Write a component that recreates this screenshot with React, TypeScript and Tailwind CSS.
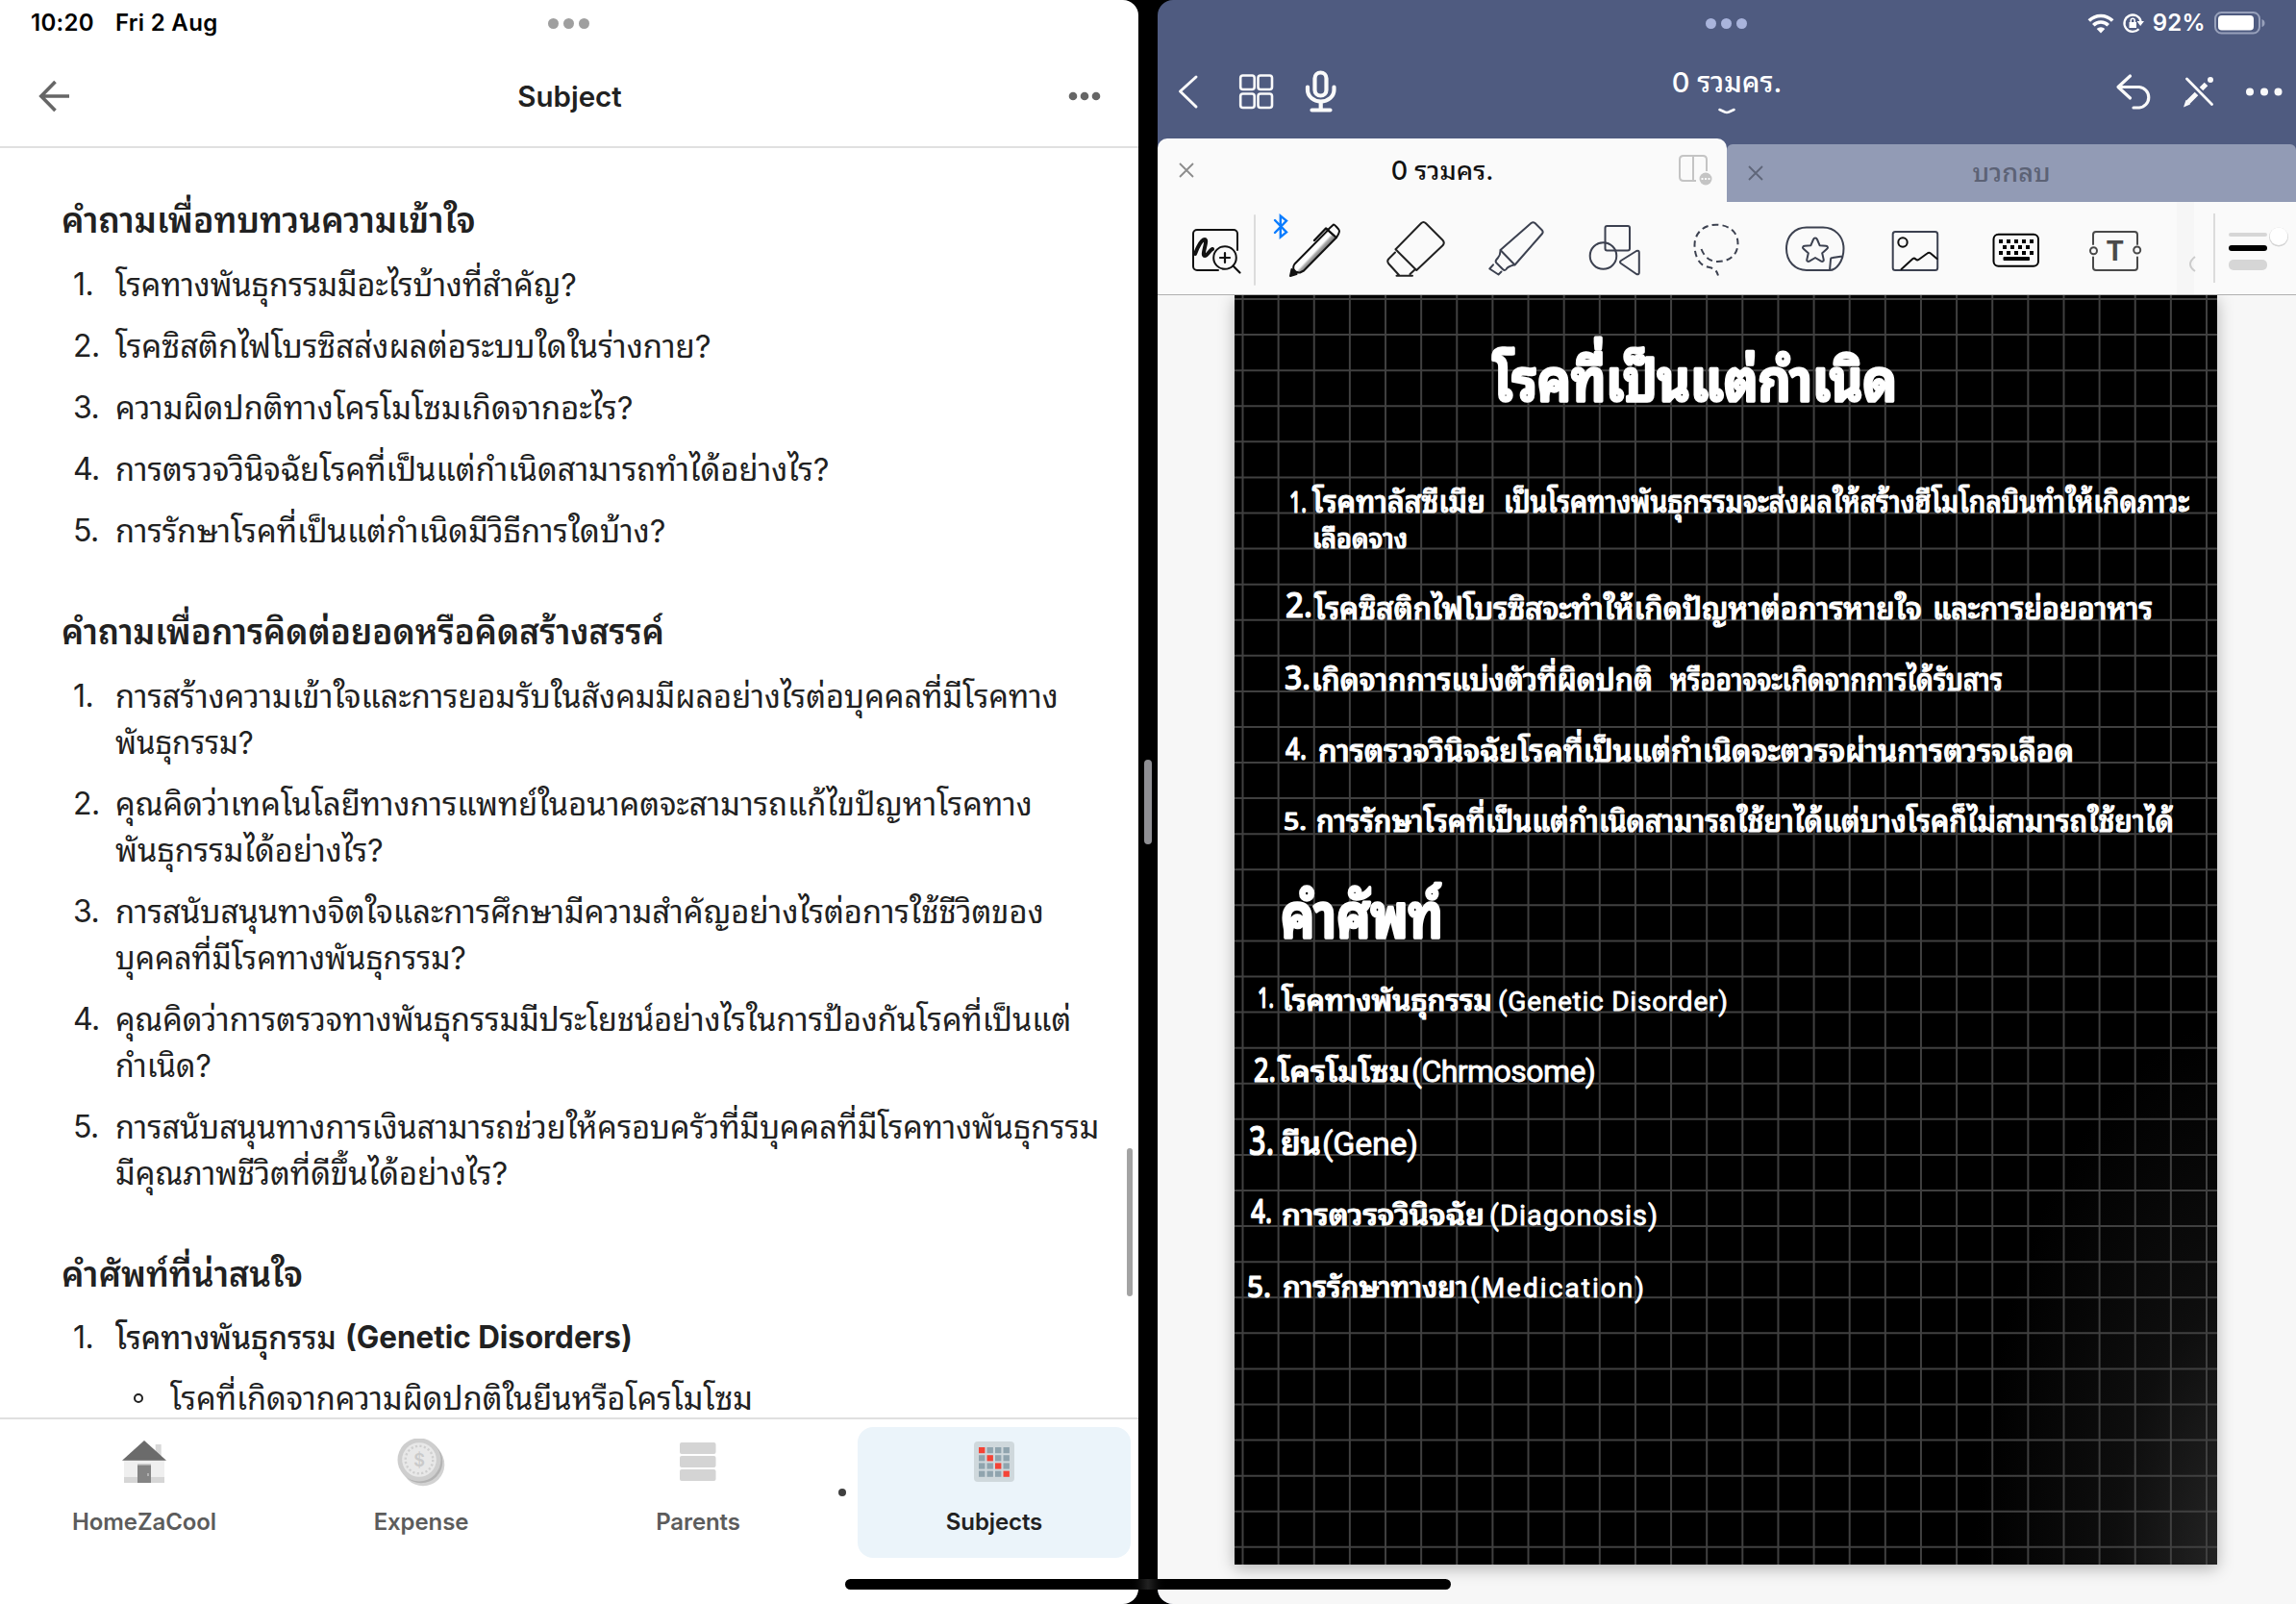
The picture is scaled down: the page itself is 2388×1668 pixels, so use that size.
import { useLayoutEffect, useRef, useState } from 'react'
import type { ReactNode } from 'react'

const THAI = "font-['Inter','Noto_Sans_Thai_Looped',sans-serif]"

// every question is a list of [line, width]
const reviewQuestions: [string, number][][] = [
  [['โรคทางพันธุกรรมมีอะไรบ้างที่สำคัญ?', 480]],
  [['โรคซิสติกไฟโบรซิสส่งผลต่อระบบใดในร่างกาย?', 620]],
  [['ความผิดปกติทางโครโมโซมเกิดจากอะไร?', 539]],
  [['การตรวจวินิจฉัยโรคที่เป็นแต่กำเนิดสามารถทำได้อย่างไร?', 743]],
  [['การรักษาโรคที่เป็นแต่กำเนิดมีวิธีการใดบ้าง?', 572]],
]

const creativeQuestions: [string, number][][] = [
  [['การสร้างความเข้าใจและการยอมรับในสังคมมีผลอย่างไรต่อบุคคลที่มีโรคทาง', 981], ['พันธุกรรม?', 144]],
  [['คุณคิดว่าเทคโนโลยีทางการแพทย์ในอนาคตจะสามารถแก้ไขปัญหาโรคทาง', 954], ['พันธุกรรมได้อย่างไร?', 279]],
  [['การสนับสนุนทางจิตใจและการศึกษามีความสำคัญอย่างไรต่อการใช้ชีวิตของ', 966], ['บุคคลที่มีโรคทางพันธุกรรม?', 365]],
  [['คุณคิดว่าการตรวจทางพันธุกรรมมีประโยชน์อย่างไรในการป้องกันโรคที่เป็นแต่', 994], ['กำเนิด?', 100]],
  [['การสนับสนุนทางการเงินสามารถช่วยให้ครอบครัวที่มีบุคคลที่มีโรคทางพันธุกรรม', 1023], ['มีคุณภาพชีวิตที่ดีขึ้นได้อย่างไร?', 408]],
]

// ink on the page: x, baseline, width, size, text
const ink: [number, number, number, number, string][] = [
  [57, 226, 18, 30, '1.'],
  [81, 226, 180, 31, 'โรคทาลัสซีเมีย'],
  [280, 226, 713, 31, 'เป็นโรคทางพันธุกรรมจะส่งผลให้สร้างฮีโมโกลบินทำให้เกิดภาวะ'],
  [81, 263, 99, 28, 'เลือดจาง'],
  [53, 335, 28, 36, '2.'],
  [83, 337, 632, 31, 'โรคซิสติกไฟโบรซิสจะทำให้เกิดปัญหาต่อการหายใจ'],
  [726, 337, 229, 31, 'และการย่อยอาหาร'],
  [52, 410, 27, 34, '3.'],
  [80, 411, 355, 31, 'เกิดจากการแบ่งตัวที่ผิดปกติ'],
  [453, 411, 346, 31, 'หรืออาจจะเกิดจากการได้รับสาร'],
  [53, 483, 22, 33, '4.'],
  [87, 485, 786, 31, 'การตรวจวินิจฉัยโรคที่เป็นแต่กำเนิดจะตวรจผ่านการตวรจเลือด'],
  [51, 556, 24, 25, '5.'],
  [85, 558, 892, 31, 'การรักษาโรคที่เป็นแต่กำเนิดสามารถใช้ยาได้แต่บางโรคก็ไม่สามารถใช้ยาได้'],
  [24, 741, 17, 28, '1.'],
  [49, 744, 219, 30, 'โรคทางพันธุกรรม'],
  [20, 818, 23, 34, '2.'],
  [45, 818, 137, 30, 'โครโมโซม'],
  [15, 894, 26, 42, '3.'],
  [48, 894, 42, 33, 'ยีน'],
  [17, 965, 22, 35, '4.'],
  [49, 967, 211, 30, 'การตวรจวินิจฉัย'],
  [13, 1042, 25, 30, '5.'],
  [50, 1042, 193, 30, 'การรักษาทางยา'],
]

const latinInk: [number, number, number, number, string][] = [
  [274, 744, 239, 28, '(Genetic Disorder)'],
  [184, 818, 192, 32, '(Chrmosome)'],
  [91, 894, 100, 34, '(Gene)'],
  [265, 967, 175, 29, '(Diagonosis)'],
  [245, 1042, 181, 28, '(Medication)'],
]

// squeezes or stretches one line of text to the given width
function Fit({ width, children }: { width: number; children: ReactNode }) {
  const ref = useRef<HTMLSpanElement>(null)
  const [scale, setScale] = useState(1)
  useLayoutEffect(() => {
    if (ref.current) setScale(width / ref.current.offsetWidth)
  }, [width])
  return (
    <span ref={ref} className="inline-block origin-left whitespace-nowrap" style={{ transform: `scaleX(${scale})` }}>
      {children}
    </span>
  )
}

function Dots({ color, className = '' }: { color: string; className?: string }) {
  return (
    <div className={`flex gap-[5px] ${className}`}>
      <i className={`size-[11px] rounded-full ${color}`} />
      <i className={`size-[11px] rounded-full ${color}`} />
      <i className={`size-[11px] rounded-full ${color}`} />
    </div>
  )
}

function Questions({ items }: { items: [string, number][][] }) {
  return (
    <ol className="mt-[19px] flex flex-col gap-4 text-[33px] leading-[48px]">
      {items.map((lines, i) => (
        <li key={i} className="flex whitespace-nowrap">
          <span className="w-[55px] shrink-0 pl-[11px] text-[32px] tracking-[-0.5px]">{i + 1}.</span>
          <div>
            {lines.map(([text, width]) => (
              <div key={text} className="h-12">
                <Fit width={width}>{text}</Fit>
              </div>
            ))}
          </div>
        </li>
      ))}
    </ol>
  )
}

function Heading({ children, width, className = '' }: { children: ReactNode; width: number; className?: string }) {
  return (
    <h2 className={`-ml-px h-12 text-[36px] leading-[48px] font-semibold ${className}`}>
      <Fit width={width}>{children}</Fit>
    </h2>
  )
}

function NavItem({ label, children, active }: { label: string; children: ReactNode; active?: boolean }) {
  return (
    <div
      className={
        active
          ? 'flex h-[136px] w-[284px] flex-col items-center rounded-2xl bg-[#ebf4fa] pt-3 text-[#212121]'
          : 'flex h-[136px] w-[288px] flex-col items-center pt-3 text-[#5c5c5c]'
      }
    >
      {children}
      <span className="mt-[23px] text-[24px] leading-8 font-semibold tracking-[-0.1px]">{label}</span>
    </div>
  )
}

function SubjectPane() {
  return (
    <section className="flex h-full w-[1184px] flex-col overflow-hidden rounded-r-[16px] bg-white text-[#212121]">
      <div className="grid h-12 shrink-0 grid-cols-3 items-center px-8 text-[24px] font-semibold tracking-[0.3px] text-black">
        <div className="flex gap-[22px] whitespace-nowrap">
          <span>10:20</span>
          <span>Fri 2 Aug</span>
        </div>
        <Dots color="bg-[#9f9f9f]" className="justify-self-center" />
      </div>
      <header className="flex h-[106px] shrink-0 items-center justify-between border-b-2 border-[#e0e0e0] pr-[39px] pl-10">
        <svg width="34" height="34" viewBox="0 0 34 34" fill="none" stroke="#666" strokeWidth="3.6">
          <path d="M32 17H3M17.5 2 2.8 17l14.7 15" />
        </svg>
        <h1 className="text-[29.5px] font-semibold">Subject</h1>
        <svg width="34" height="10" viewBox="0 0 34 10" fill="#666">
          <circle cx="5" cy="5" r="4.3" />
          <circle cx="17" cy="5" r="4.3" />
          <circle cx="29" cy="5" r="4.3" />
        </svg>
      </header>

      <div className="relative min-h-0 flex-1 overflow-hidden pt-[51px] pl-[65px]">
        <Heading width={431}>คำถามเพื่อทบทวนความเข้าใจ</Heading>
        <Questions items={reviewQuestions} />
        <Heading width={627} className="mt-[57px]">คำถามเพื่อการคิดต่อยอดหรือคิดสร้างสรรค์</Heading>
        <Questions items={creativeQuestions} />
        <Heading width={251} className="mt-[57px]">คำศัพท์ที่น่าสนใจ</Heading>
        <div className="mt-[18px] flex h-12 text-[33px] leading-[48px] whitespace-nowrap">
          <span className="w-[55px] shrink-0 pl-[11px] text-[32px] tracking-[-0.5px]">1.</span>
          <div className="w-[239px] font-medium">
            <Fit width={230}>โรคทางพันธุกรรม</Fit>
          </div>
          <b className="text-[32px]">
            <Fit width={299}>(Genetic Disorders)</Fit>
          </b>
        </div>
        <div className="mt-[15px] flex h-12 items-center text-[33px] leading-[48px]">
          <i className="mr-[28px] ml-[74px] size-[10px] rounded-full border-2 border-[#212121]" />
          <Fit width={606}>โรคที่เกิดจากความผิดปกติในยีนหรือโครโมโซม</Fit>
        </div>
        <i className="absolute top-[1040px] right-1.5 h-[154px] w-1.5 rounded-full bg-[#a3a3a3]" />
      </div>

      <nav className="flex h-[194px] shrink-0 border-t-2 border-[#e0e0e0] pt-2 pl-1.5">
        <NavItem label="HomeZaCool">
          <svg width="48" height="48" viewBox="0 0 48 48">
            <path fill="#d8d8d8" d="M35.7 6h6v16h-6z" />
            <path fill="#efefef" d="M3 22h42v24H3z" />
            <path fill="#d6d6d6" d="M3 40h42v6H3z" />
            <path fill="#848484" d="M17 27h14v19H17z" />
            <path fill="#b0b0b0" d="M17 26.5h14v1.5H17zM27 36h2v3h-2z" />
            <path fill="#6b6b6b" d="M24 2 47 22.7H1z" />
          </svg>
        </NavItem>
        <NavItem label="Expense">
          <svg width="50" height="50" viewBox="0 0 50 50" className="-mb-0.5">
            <circle cx="27" cy="27" r="22.3" fill="#d2d2d2" />
            <circle cx="25" cy="24" r="22.3" fill="#b3b3b3" />
            <circle cx="23" cy="22" r="22.5" fill="#cecece" />
            <circle cx="23" cy="22" r="17.8" fill="#e8e8e8" />
            <circle cx="23" cy="22" r="14.3" fill="none" stroke="#cfcfcf" strokeWidth="2.4" strokeDasharray="2.2 2.29" />
            <text x="23" y="28.5" textAnchor="middle" fontSize="18" fontWeight="600" fill="#cacaca">$</text>
          </svg>
        </NavItem>
        <NavItem label="Parents">
          <svg width="48" height="48" viewBox="0 0 48 48" fill="#d4d4d4">
            <rect x="5" y="4" width="37.5" height="12" rx="2" />
            <rect x="5" y="18" width="37.5" height="12" rx="2" />
            <rect x="5" y="32" width="37.5" height="12" rx="2" />
          </svg>
        </NavItem>
        <i className="mt-[64px] mr-[12px] ml-[2px] size-2 rounded-full bg-[#3f3f3f]" />
        <NavItem label="Subjects" active>
          <svg width="48" height="48" viewBox="0 0 48 48">
            <rect x="3" y="3" width="42" height="42" rx="4" fill="#cfd8dc" />
            {[0, 1, 2, 3].map((r) =>
              [0, 1, 2, 3].map((c) => (
                <rect key={r * 4 + c} x={8 + c * 8.5} y={9 + r * 8.2} width="6.4" height="6.2" fill={r === c ? '#f44336' : '#90a4ae'} />
              ))
            )}
          </svg>
        </NavItem>
      </nav>
    </section>
  )
}

function Close({ color }: { color: string }) {
  return (
    <svg width="16" height="16" viewBox="0 0 16 16" stroke={color} strokeWidth="1.8">
      <path d="m1 1 14 14M15 1 1 15" />
    </svg>
  )
}

function Tool({ children, color = '#3c4150' }: { children: ReactNode; color?: string }) {
  return (
    <svg className="shrink-0" width="104" height="96" viewBox="0 0 104 96" fill="none" stroke={color} strokeWidth="2" strokeLinejoin="round" strokeLinecap="round">
      {children}
    </svg>
  )
}

function Toolbar() {
  return (
    <div className="relative flex h-[97px] shrink-0 border-b border-[#b0b0b0] bg-[#fafafa] pl-2">
      <Tool color="#111">
        <path d="M75 50V33a4 4 0 0 0-4-4H33a4 4 0 0 0-4 4v34a4 4 0 0 0 4 4h22" />
        <path strokeWidth="4" d="M31 54c3-8 7-15 10-15 4 0-4 17 0 17 3 0 5-6 8-7" />
        <circle cx="62" cy="58" r="11.8" fill="#fafafa" />
        <path strokeWidth="2.2" d="M62 53v10M57 58h10M70.5 66.5l7 7" />
        <path stroke="#dcdcdc" strokeWidth="2" d="M93 14v72" />
      </Tool>
      <Tool color="#111">
        <path stroke="#0a7cff" strokeWidth="2.4" strokeLinejoin="miter" d="m10 19 12 12.5-6.2 5V14.5l6.200 5L10 32" />
        <defs>
          <linearGradient id="barrel" x1="47" y1="47.5" x2="55.5" y2="55.5" gradientUnits="userSpaceOnUse">
            <stop offset=".5" stopColor="#fff" />
            <stop offset=".7" stopColor="#aaa" />
            <stop offset="1" stopColor="#777" />
          </linearGradient>
        </defs>
        <path fill="url(#barrel)" d="M65 29.5 30.5 64.500C28 68 29 74 36 73.500L40 71.500 74 37z" />
        <path fill="#fafafa" d="m65 29 6-5.500c1 0 6 5 6 6.500s-1 4-3 7z" />
        <path strokeWidth="2.4" d="m51 40 12-12.500 2.500 2" />
        <path fill="#111" d="m26 77 1.500-7 5 5z" />
      </Tool>
      <Tool color="#222">
        <path d="m31.500 49.300 26.500-27q2.500-2.500 5 0l17.500 17.500q2.500 2.700 0 5.500L53.300 71z" />
        <path d="m31 52.500-6.500 6.500q-2.500 2.500 0 5.500L35 76M32.500 76.700H49M46.500 75l5.500-5" />
      </Tool>
      <Tool>
        <path d="m36.500 50 32-28q2-1.500 4 0l7 7q2 2 .5 4L51.500 65.500z" />
        <path d="M36.500 51c0 6-2 6-4.500 9.500q-1 2 1 3.500l6 6q2 2 3.500 0c2-3 4-3.500 8-4.500M29 65.300l-3.700 4.200 9.200 6 3-3" />
      </Tool>
      <Tool>
        <circle cx="39.500" cy="56" r="13.800" />
        <rect x="41.500" y="25" width="25.500" height="25.500" rx="2" />
        <path d="M58 61q-2 1.500 0 3l16 11q2.800 1 2.800-1.500v-21q0-2.500-2.800-1.500z" />
      </Tool>
      <Tool>
        <path strokeDasharray="6.500 4.200" strokeLinecap="butt" d="M37.500 49C41 58 47 62 54.500 62 67 62 75.500 55 75.500 43S66 23.700 53 23.700 30.500 32 30.500 45c0 9 3 17 9 21 6 3 13 1 15.500 10.500" />
      </Tool>
      <Tool>
        <path d="M67 71H43c-12 0-21-9-21-22.500S31 26.500 43 26.500h17c12 0 21.500 9 21.500 22S74 71 67 71l1-11q0-2 2-2l10-1.500" />
        <path d="M52 37.500c1 0 1.700.7 2 1.500l2.600 6.200 6.600.6c1.800.3 2.400 1.800 1 3l-5 4.500 1.500 6.600c.3 1.600-1.200 2.500-2.600 1.700L52 58l-6.100 3.600c-1.400.8-2.900-.1-2.600-1.700l1.500-6.600-5-4.500c-1.400-1.200-.8-2.700 1-3l6.600-.6L50 39c.3-.8 1-1.500 2-1.500z" />
      </Tool>
      <Tool>
        <rect x="28.700" y="31" width="46.500" height="40" rx="2.500" />
        <g stroke="#111">
          <circle cx="39" cy="42" r="4.700" />
          <path d="m37.500 70 12-11q1.500-1 3 .5t3 .5l9-6.500q1.800-1.500 3.500 0l6.500 5.500" />
        </g>
      </Tool>
      <Tool color="#000">
        <rect x="29.500" y="33.700" width="46.500" height="33" rx="5" />
        <g fill="#000" stroke="none">
          {[35, 43, 51, 59, 67].map((x) => (
            <path key={x} d={`M${x} 39h4v4h-4zM${x} 51h4v4h-4z`} />
          ))}
          {[39, 47, 55, 63].map((x) => (
            <path key={x} d={`M${x} 45h4v4h-4z`} />
          ))}
          <rect x="39.500" y="57" width="27.500" height="4" rx="1" />
        </g>
      </Tool>
      <Tool color="#4a4a4a">
        <path d="M29 44V34q0-3 3-3h40q3 0 3 3v10M29 57.500V68q0 3 3 3h40q3 0 3-3V57.500" />
        <circle cx="29.500" cy="50.700" r="3.500" />
        <circle cx="74.700" cy="50" r="3.500" />
        <text x="51.800" y="61.300" textAnchor="middle" fontSize="28.500" fontWeight="700" fill="#4a4a4a" stroke="none">T</text>
      </Tool>
      <svg width="136" height="96" viewBox="0 0 136 96" fill="none" className="shrink-0">
        <path fill="#f6f6f6" d="M12 0h18v96H12z" />
        <path stroke="#ccc" strokeWidth="2" d="M31 57q-10 8 0 15" />
        <path stroke="#dcdcdc" strokeWidth="2" d="M51 12v72" />
        <rect x="66" y="32" width="40" height="4" rx="2" fill="#d6d6d6" />
        <rect x="66" y="45" width="40" height="6" rx="3" fill="#000" />
        <rect x="66" y="60" width="40" height="11" rx="5" fill="#d6d6d6" />
        <circle cx="118" cy="36.500" r="10" fill="#d4d4d4" />
        <circle cx="118" cy="35.700" r="9.300" fill="#fff" />
      </svg>
    </div>
  )
}

function NotesHeader() {
  return (
    <header className="flex h-[144px] shrink-0 flex-col text-white">
      <div className="grid h-12 grid-cols-3 items-center">
        <Dots color="bg-[#a9b4dc]" className="col-start-2 justify-self-center" />
        <div className="mr-[31px] flex items-center justify-self-end text-[24px] font-semibold">
          <svg width="28" height="22" viewBox="0 0 28 22" fill="none" stroke="#fff" strokeWidth="3.600">
            <path d="M1.800 8.500a17.300 17.300 0 0 1 24.400 0M6.300 13.200a10.900 10.900 0 0 1 15.400 0" />
            <path fill="#fff" stroke="none" d="M14 21.500 9.700 17a6.200 6.200 0 0 1 8.600 0z" />
          </svg>
          <svg width="24" height="22" viewBox="0 0 24 22" fill="none" stroke="#fff" strokeWidth="2.300" className="ml-2">
            <path d="M17.500 17.200A8.700 8.700 0 1 1 19.600 9" />
            <path fill="#fff" stroke="none" d="M15.500 9h7.500l-3.800 5zM7.500 10h7.500v6H7.500z" />
            <path strokeWidth="1.500" d="M9.200 10V8.200a2 2 0 0 1 4 0V10" />
          </svg>
          <span className="ml-2 tracking-[0.3px]">92%</span>
          <svg width="54" height="24" viewBox="0 0 54 24" fill="none" className="ml-[9px]">
            <rect x="1" y="1" width="46" height="21.500" rx="6.500" stroke="#98a1bb" strokeWidth="2" />
            <rect x="4" y="4" width="37" height="15.500" rx="3.800" fill="#fff" />
            <path fill="#98a1bb" d="M49.500 8q3 1 3 4t-3 4z" />
          </svg>
        </div>
      </div>
      <div className="grid h-24 grid-cols-3 items-start">
        <svg width="190" height="80" viewBox="0 0 190 80" fill="none" stroke="#fafafa" strokeWidth="3" strokeLinecap="round" strokeLinejoin="round">
          <path d="M40 32 23.500 47 40 63" />
          <g strokeWidth="2.600">
            <rect x="86.200" y="30.500" width="14.500" height="14.500" rx="2.500" />
            <rect x="104.500" y="30.500" width="14.500" height="14.500" rx="2.500" />
            <rect x="86.200" y="49.500" width="14.500" height="14.500" rx="2.500" />
            <rect x="104.500" y="49.500" width="14.500" height="14.500" rx="2.500" />
          </g>
          <g strokeWidth="4.200">
            <rect x="163.500" y="27.500" width="12" height="24" rx="6" />
            <path d="M156 42.500v3a13.700 12 0 0 0 27.500 0v-3M169.700 58.500v6M160.500 66.500h19" />
          </g>
        </svg>
        <div className="flex flex-col items-center pt-[19px]">
          <span className="text-[29px] leading-[38px] font-medium">0 รวมคร.</span>
          <svg width="18" height="7" viewBox="0 0 18 7" fill="none" stroke="#fff" strokeWidth="2.500" strokeLinecap="round" className="mt-[7px]">
            <path d="m1.500 2 5.500 2.500q2 .8 4 0L16.500 2" />
          </svg>
        </div>
        <svg width="190" height="80" viewBox="0 0 190 80" fill="none" stroke="#fafafa" strokeWidth="3.200" strokeLinecap="round" strokeLinejoin="round" className="justify-self-end">
          <path d="M17.500 31 5 42.500 17.500 54M5.500 42.500h21.500a10.800 10.800 0 0 1 0 21.500h-6" />
          <path strokeWidth="2.800" d="m76.500 34 26 26.500" />
          <path strokeWidth="5" strokeLinecap="butt" d="m77.500 58.500 9-9M91.500 44.500l5-5" />
          <path fill="#fafafa" stroke="none" d="m73 63.500 2.500-7.500 4.500 4.500z" />
          <circle cx="101" cy="35" r="3" fill="#fafafa" stroke="none" />
          <g fill="#fafafa" stroke="none">
            <circle cx="142" cy="47.500" r="4" />
            <circle cx="157" cy="47.500" r="4" />
            <circle cx="171.500" cy="47.500" r="4" />
          </g>
        </svg>
      </div>
    </header>
  )
}

function NotePage() {
  return (
    <div className="mx-auto h-[1320px] w-[1022px] -translate-x-[1px] bg-black shadow-[0_4px_16px_rgba(0,0,0,0.28)]">
      <svg width="1022" height="1320" viewBox="0 0 1022 1320">
        <defs>
          <radialGradient id="glow" cx="1060" cy="1330" r="580" gradientUnits="userSpaceOnUse" gradientTransform="translate(1060 0) scale(.5 1) translate(-1060 0)">
            <stop offset="0" stopColor="#2a2a2a" />
            <stop offset=".5" stopColor="#0e0e0e" />
            <stop offset="1" stopColor="#000" />
          </radialGradient>
        </defs>
        <rect width="1022" height="1320" fill="url(#glow)" />
        <g stroke="#404040" strokeWidth="2">
          {Array.from({ length: 28 }, (_, i) => (
            <path key={i} d={`M${8.5 + i * 37.13} 0v1320`} />
          ))}
          {Array.from({ length: 36 }, (_, i) => (
            <path key={i} d={`M0 ${4 + i * 37.08}h1022`} />
          ))}
        </g>
        <g fill="#fff" stroke="#fff" strokeLinejoin="round">
          <g fontWeight="600" strokeWidth="3.500" className="font-['Noto_Sans_Thai_Looped',sans-serif]">
            <text x="269" y="110" fontSize="60" textLength="420" lengthAdjust="spacingAndGlyphs">โรคที่เป็นแต่กำเนิด</text>
            <text x="48" y="668" fontSize="62" textLength="169" lengthAdjust="spacingAndGlyphs">คำศัพท์</text>
          </g>
          <g fontWeight="500" strokeWidth="1.200" className="font-['Noto_Sans_Thai_Looped','Roboto',sans-serif]">
            {ink.map(([x, y, w, size, t]) => (
              <text key={x + '-' + y} x={x} y={y} fontSize={size} textLength={w} lengthAdjust="spacingAndGlyphs">{t}</text>
            ))}
          </g>
          <g fontWeight="400" strokeWidth=".800" className="font-['Roboto',sans-serif]">
            {latinInk.map(([x, y, w, size, t]) => (
              <text key={y} x={x} y={y} fontSize={size} textLength={w} lengthAdjust="spacing">{t}</text>
            ))}
          </g>
        </g>
      </svg>
    </div>
  )
}

function NotesPane() {
  return (
    <section className="flex h-full w-[1184px] flex-col overflow-hidden rounded-l-[16px] bg-[#4f5b80]">
      <NotesHeader />
      <div className="flex h-[66px] shrink-0 items-end">
        <div className="grid h-[66px] w-[592px] grid-cols-[40px_1fr_40px] items-center rounded-t-[10px] bg-[#fafafa] px-[22px] text-[#111]">
          <Close color="#8c8c8c" />
          <span className="pt-0.5 text-center text-[27px] font-medium">0 รวมคร.</span>
          <svg width="36" height="32" viewBox="0 0 36 32" fill="none" stroke="#c4c4c4" strokeWidth="2" className="ml-3">
            <path d="M18 27H5q-4 0-4-4V5q0-4 4-4h20q4 0 4 4v12M15 1v26" />
            <circle cx="28" cy="25" r="6.500" fill="#c4c4c4" stroke="none" />
            <path stroke="#fafafa" strokeDasharray="2 1.500" d="M23.500 25h9" />
          </svg>
        </div>
        <div className="grid h-[60px] w-[592px] grid-cols-[40px_1fr_40px] items-center rounded-t-[6px] bg-[#929bb5] px-[22px] text-[#5c6275]">
          <Close color="#5f6679" />
          <span className="text-center text-[27px] font-medium">บวกลบ</span>
        </div>
      </div>
      <Toolbar />
      <div className="min-h-0 flex-1 overflow-hidden bg-[#f7f7f7]">
        <NotePage />
      </div>
    </section>
  )
}

export default function App() {
  return (
    <main className={`relative flex h-[1668px] w-[2388px] overflow-hidden bg-black ${THAI}`}>
      <SubjectPane />
      <div className="flex w-5 items-center justify-center">
        <i className="h-[88px] w-2 rounded-full bg-[#8e8e93]" />
      </div>
      <NotesPane />
      {/* home indicator */}
      <div className="absolute bottom-[15px] left-[879px] flex h-[11px] w-[630px] justify-center rounded-full bg-black">
        <i className="w-[44px] bg-gradient-to-r from-black via-[#222] to-black" />
      </div>
    </main>
  )
}
